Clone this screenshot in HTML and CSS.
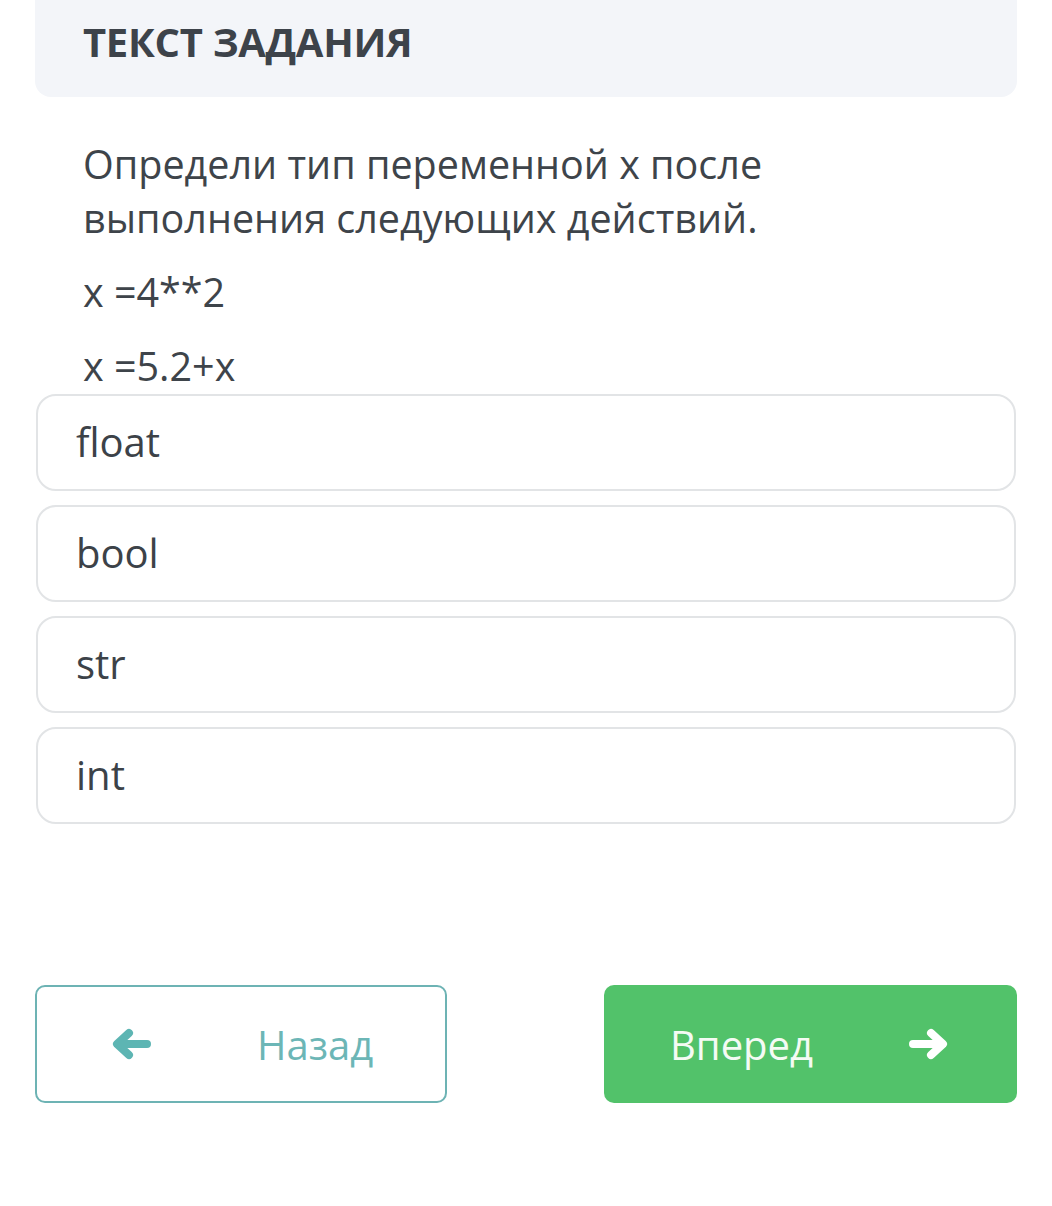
FILE: index.html
```html
<!DOCTYPE html>
<html lang="ru">
<head>
<meta charset="utf-8">
<link rel="stylesheet" href="styles.css">
</head>
<body>
<div class="page">
  <div class="head"><h1 class="head-title">ТЕКСТ ЗАДАНИЯ</h1></div>
  <div class="task">
    <p class="task-q">Определи тип переменной х после выполнения следующих действий.</p>
    <p class="task-line">x =4**2</p>
    <p class="task-line last">x =5.2+x</p>
  </div>
  <div class="options">
    <div class="opt">float</div>
    <div class="opt">bool</div>
    <div class="opt">str</div>
    <div class="opt">int</div>
  </div>
  <div class="nav">
    <button class="btn back">
      <svg class="ico" viewBox="0 0 40 32" width="40" height="32"><path d="M36 16H8M18 5L6 16l12 11" fill="none" stroke="#5db5b3" stroke-width="8" stroke-linecap="round" stroke-linejoin="round"/></svg>
      <span class="btn-text">Назад</span>
    </button>
    <button class="btn next">
      <span class="btn-text">Вперед</span>
      <svg class="ico" viewBox="0 0 40 32" width="40" height="32"><path d="M4 16h28M22 5l12 11-12 11" fill="none" stroke="#ffffff" stroke-width="8" stroke-linecap="round" stroke-linejoin="round"/></svg>
    </button>
  </div>
</div>
</body>
</html>
```

FILE: styles.css
```css
* { box-sizing: border-box; }
html, body { margin: 0; padding: 0; background: #fff; }
body { font-family: "Open Sans", "Noto Sans", sans-serif; color: #3c4248; }
.page { width: 1052px; padding: 0 35px; }
.head {
  background: #f3f5f9;
  border-radius: 0 0 16px 16px;
  height: 97px;
  padding: 0 48px;
  display: flex;
  align-items: center;
}
.head-title {
  margin: -14px 0 0;
  font-size: 40px;
  font-weight: 700;
  color: #3d434a;
  letter-spacing: -0.3px;
}
.task { padding: 40px 48px 0; }
.task-q {
  margin: 0;
  font-size: 39.5px;
  line-height: 54px;
  color: #3e444a;
  width: 760px;
}
.task-line {
  margin: 20px 0 0;
  font-size: 39.5px;
  line-height: 54px;
  color: #3e444a;
}
.task-line.last { height: 55px; }
.options { display: flex; flex-direction: column; gap: 14px; }
.opt {
  height: 97px;
  border: 2px solid #e2e4e6;
  border-radius: 20px;
  padding: 0 38px 2px;
  display: flex;
  align-items: center;
  font-size: 40px;
  color: #3c4248;
  margin: 0 1px;
}
.nav {
  margin-top: 161px;
  display: flex;
  justify-content: space-between;
}
.btn {
  width: 412px;
  height: 118px;
  border-radius: 10px;
  font-family: "Open Sans", "Noto Sans", sans-serif;
  font-size: 40px;
  display: flex;
  align-items: center;
  cursor: pointer;
}
.btn.back {
  background: #fff;
  border: 2px solid #6db3b4;
  color: #6cb6b6;
  padding: 0 0 0 74px;
}
.btn.back .btn-text { margin-left: 106px; }
.btn.next {
  width: 413px;
  background: #52c26a;
  border: none;
  color: #f4fbf4;
  padding: 0 0 0 66px;
}
.btn.next .btn-text { margin-right: 96px; }
.ico { display: block; }
```
